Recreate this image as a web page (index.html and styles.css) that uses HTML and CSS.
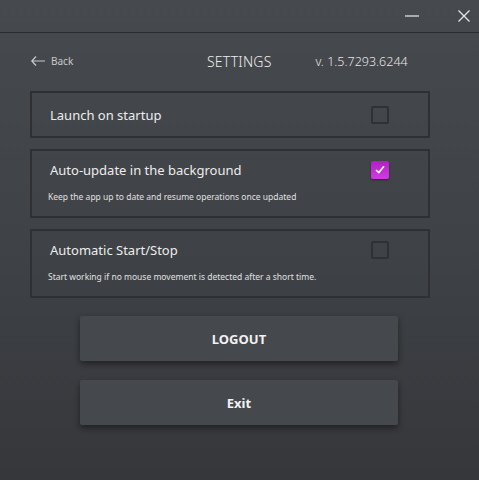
FILE: index.html
```html
<!DOCTYPE html>
<html lang="en">
<head>
    <meta charset="UTF-8">
    <meta name="viewport" content="width=device-width, initial-scale=1.0">
    <title>Settings</title>
    <link rel="stylesheet" href="styles.css">
</head>
<body>
    <div class="window">
        <div class="titlebar">
            <span class="win-btn minimize"><svg width="14" height="2" viewBox="0 0 14 2"><rect width="14" height="2" fill="#a9abae"/></svg></span>
            <span class="win-btn close"><svg width="12" height="12" viewBox="0 0 12 12"><path d="M0.5 0.5 L11.5 11.5 M11.5 0.5 L0.5 11.5" stroke="#e6e6e6" stroke-width="1.3"/></svg></span>
        </div>

        <div class="header">
            <a class="back" href="#">
                <svg width="14" height="10" viewBox="0 0 14 10"><path d="M5 0.5 L0.8 5 L5 9.5 M0.8 5 H14" stroke="#c9cacc" stroke-width="1.2" fill="none"/></svg>
                <span>Back</span>
            </a>
            <h1>SETTINGS</h1>
            <span class="version">v. 1.5.7293.6244</span>
        </div>

        <div class="settings">
            <div class="card">
                <div class="card-row">
                    <span class="card-title">Launch on startup</span>
                    <span class="checkbox"></span>
                </div>
            </div>
            <div class="card has-desc">
                <div class="card-row">
                    <span class="card-title">Auto-update in the background</span>
                    <span class="checkbox checked"><svg width="10" height="9" viewBox="0 0 10 9"><path d="M1 5 L3.8 7.6 L9 1.2" stroke="#fff" stroke-width="1.6" fill="none"/></svg></span>
                </div>
                <p class="card-desc">Keep the app up to date and resume operations once updated</p>
            </div>
            <div class="card has-desc">
                <div class="card-row">
                    <span class="card-title">Automatic Start/Stop</span>
                    <span class="checkbox"></span>
                </div>
                <p class="card-desc">Start working if no mouse movement is detected after a short time.</p>
            </div>
        </div>

        <div class="actions">
            <button>LOGOUT</button>
            <button>Exit</button>
        </div>
    </div>
</body>
</html>
```

FILE: styles.css
```css
body {
    margin: 0;
    font-family: 'Noto Sans', 'Open Sans', sans-serif;
    color: #e6e6e6;
}
.window {
    width: 479px;
    height: 480px;
    background: linear-gradient(to bottom, #46494d 0%, #3f4246 50%, #35373b 100%);
    overflow: hidden;
}
.titlebar {
    height: 32px;
    border-bottom: 1px solid #2a2c2f;
    display: flex;
    justify-content: flex-end;
    align-items: center;
    padding-right: 9px;
    gap: 39px;
}
.win-btn {
    display: flex;
    align-items: center;
}
.close {
    margin-top: -1px;
}
.header {
    height: 56px;
    display: flex;
    align-items: center;
    padding-left: 31px;
}
.back {
    display: flex;
    align-items: center;
    gap: 6px;
    color: #c9cacc;
    text-decoration: none;
    font-size: 10px;
    width: 176px;
}
h1 {
    margin: 0;
    font-size: 14px;
    font-weight: 300;
    color: #ececec;
    letter-spacing: 0.2px;
}
.version {
    margin-left: 44px;
    font-size: 12.5px;
    font-weight: 300;
    color: #e6e6e6;
}
.settings {
    display: flex;
    flex-direction: column;
    gap: 11px;
    padding: 2px 49px 0 30px;
}
.card {
    border: 2px solid #2e3033;
    display: flex;
    flex-direction: column;
}
.card-row {
    height: 43px;
    display: flex;
    align-items: center;
    justify-content: space-between;
    padding: 0 39px 0 18px;
}
.has-desc .card-row {
    height: 37px;
}
.card-title {
    font-size: 13px;
    color: #ededed;
}
.checkbox {
    width: 14px;
    height: 14px;
    border: 2px solid #2f3134;
    border-radius: 2px;
    display: flex;
    align-items: center;
    justify-content: center;
}
.checkbox.checked {
    width: 18px;
    height: 18px;
    border: none;
    background: linear-gradient(to bottom, #b21fc6, #d13ae2);
    box-shadow: 0 1px 2px rgba(0, 0, 0, 0.4);
}
.card-desc {
    margin: 3px 0 13px 16px;
    font-size: 8.5px;
    line-height: 12px;
    color: #e0e0e0;
}
.actions {
    display: flex;
    flex-direction: column;
    align-items: center;
    gap: 19px;
    margin-top: 18px;
    padding-right: 1px;
}
button {
    width: 318px;
    height: 45px;
    background-color: #45484c;
    border: none;
    border-radius: 2px;
    color: #f2f2f2;
    font-family: 'Noto Sans', 'Open Sans', sans-serif;
    font-size: 13px;
    font-weight: 700;
    box-shadow: 0 3px 6px rgba(0, 0, 0, 0.45);
    cursor: pointer;
}
```
